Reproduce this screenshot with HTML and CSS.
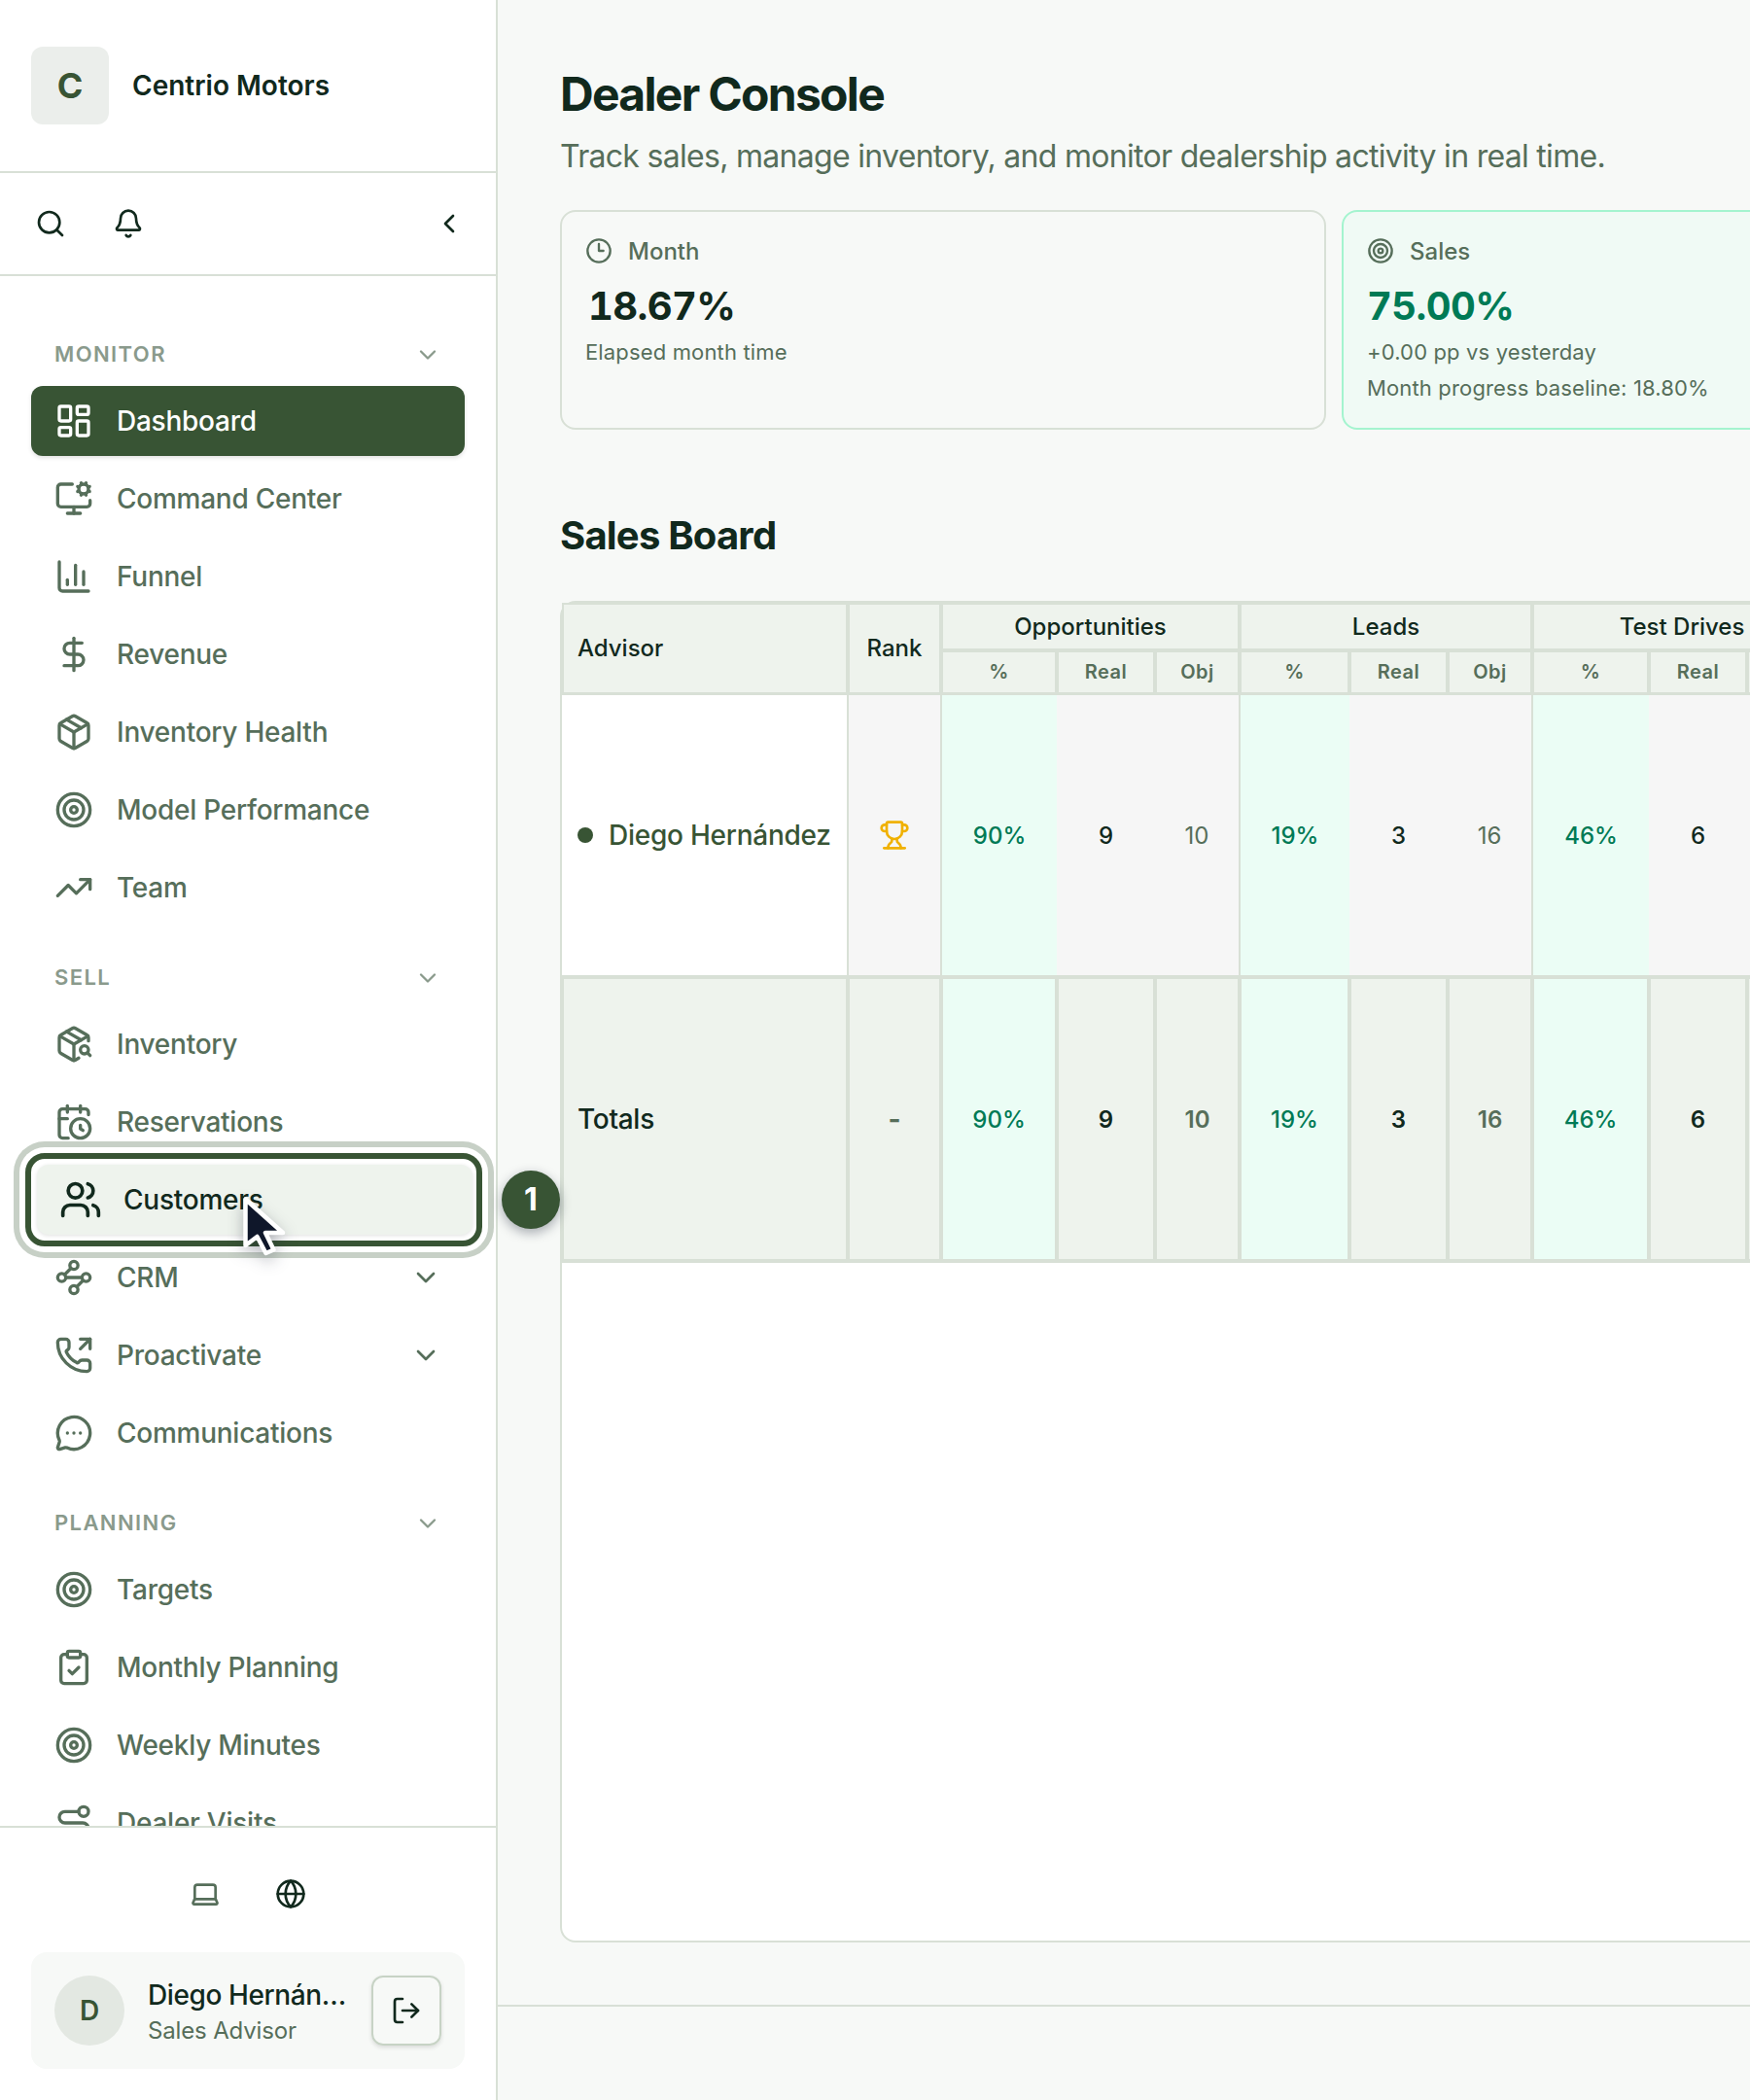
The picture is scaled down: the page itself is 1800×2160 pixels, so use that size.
FILE: index.html
```html
<!DOCTYPE html>
<html lang="en">
<head>
    <meta charset="UTF-8">
    <meta name="viewport" content="width=device-width, initial-scale=1.0">
    <title>Dealer Console - Centrio Motors</title>
    <link rel="stylesheet" href="styles.css">
</head>
<body>
    <!-- Shared icon shapes -->
    <svg class="sprite" aria-hidden="true">
        <symbol id="i-search" viewBox="0 0 24 24"><path d="m21 21-4.34-4.34"/><circle cx="11" cy="11" r="8"/></symbol>
        <symbol id="i-bell" viewBox="0 0 24 24"><path d="M10.268 21a2 2 0 0 0 3.464 0"/><path d="M3.262 15.326A1 1 0 0 0 4 17h16a1 1 0 0 0 .74-1.673C19.41 13.956 18 12.499 18 8A6 6 0 0 0 6 8c0 4.499-1.411 5.956-2.738 7.326"/></symbol>
        <symbol id="i-left" viewBox="0 0 24 24"><path d="m15 18-6-6 6-6"/></symbol>
        <symbol id="i-down" viewBox="0 0 24 24"><path d="m6 9 6 6 6-6"/></symbol>
        <symbol id="i-dashboard" viewBox="0 0 24 24"><rect width="7" height="9" x="3" y="3" rx="1"/><rect width="7" height="5" x="14" y="3" rx="1"/><rect width="7" height="9" x="14" y="12" rx="1"/><rect width="7" height="5" x="3" y="16" rx="1"/></symbol>
        <symbol id="i-monitor" viewBox="0 0 24 24"><path d="M12 17v4"/><path d="m14.305 7.53.923-.382"/><path d="m15.228 4.852-.923-.383"/><path d="m16.852 3.228-.383-.924"/><path d="m16.852 8.772-.383.923"/><path d="m19.148 3.228.383-.924"/><path d="m19.53 9.696-.382-.924"/><path d="m20.772 4.852.924-.383"/><path d="m20.772 7.148.924.383"/><path d="M22 13v2a2 2 0 0 1-2 2H4a2 2 0 0 1-2-2V5a2 2 0 0 1 2-2h7"/><path d="M8 21h8"/><circle cx="18" cy="6" r="3"/></symbol>
        <symbol id="i-chart" viewBox="0 0 24 24"><path d="M3 3v16a2 2 0 0 0 2 2h16"/><path d="M18 17V9"/><path d="M13 17V5"/><path d="M8 17v-3"/></symbol>
        <symbol id="i-dollar" viewBox="0 0 24 24"><path d="M12 2v20"/><path d="M17 5H9.5a3.5 3.5 0 0 0 0 7h5a3.5 3.5 0 0 1 0 7H6"/></symbol>
        <symbol id="i-package" viewBox="0 0 24 24"><path d="M11 21.73a2 2 0 0 0 2 0l7-4A2 2 0 0 0 21 16V8a2 2 0 0 0-1-1.73l-7-4a2 2 0 0 0-2 0l-7 4A2 2 0 0 0 3 8v8a2 2 0 0 0 1 1.73z"/><path d="M12 22V12"/><path d="M3.29 7 12 12l8.71-5"/><path d="m7.5 4.27 9 5.15"/></symbol>
        <symbol id="i-target" viewBox="0 0 24 24"><circle cx="12" cy="12" r="10"/><circle cx="12" cy="12" r="6"/><circle cx="12" cy="12" r="2"/></symbol>
        <symbol id="i-trend" viewBox="0 0 24 24"><path d="M16 7h6v6"/><path d="m22 7-8.5 8.5-5-5L2 17"/></symbol>
        <symbol id="i-package-search" viewBox="0 0 24 24"><path d="M21 10V8a2 2 0 0 0-1-1.73l-7-4a2 2 0 0 0-2 0l-7 4A2 2 0 0 0 3 8v8a2 2 0 0 0 1 1.73l7 4a2 2 0 0 0 2 0l2-1.14"/><path d="m7.5 4.27 9 5.15"/><path d="M3.29 7 12 12l8.71-5"/><path d="M12 22V12"/><circle cx="18.5" cy="15.5" r="2.5"/><path d="M20.27 17.27 22 19"/></symbol>
        <symbol id="i-calendar-clock" viewBox="0 0 24 24"><path d="M16 14v2.2l1.6 1"/><path d="M16 2v4"/><path d="M21 7.5V6a2 2 0 0 0-2-2H5a2 2 0 0 0-2 2v14a2 2 0 0 0 2 2h3.5"/><path d="M3 10h5"/><path d="M8 2v4"/><circle cx="16" cy="16" r="6"/></symbol>
        <symbol id="i-users" viewBox="0 0 24 24"><path d="M16 21v-2a4 4 0 0 0-4-4H6a4 4 0 0 0-4 4v2"/><path d="M16 3.128a4 4 0 0 1 0 7.744"/><path d="M22 21v-2a4 4 0 0 0-3-3.87"/><circle cx="9" cy="7" r="4"/></symbol>
        <symbol id="i-waypoints" viewBox="0 0 24 24"><circle cx="12" cy="4.5" r="2.5"/><path d="m10.2 6.3-3.9 3.9"/><circle cx="4.5" cy="12" r="2.5"/><path d="M7 12h10"/><circle cx="19.5" cy="12" r="2.5"/><path d="m13.8 17.7 3.9-3.9"/><circle cx="12" cy="19.5" r="2.5"/></symbol>
        <symbol id="i-phone" viewBox="0 0 24 24"><path d="m16 8 6-6"/><path d="M22 8V2h-6"/><path d="M13.832 16.568a1 1 0 0 0 1.213-.303l.355-.465A2 2 0 0 1 17 15h3a2 2 0 0 1 2 2v3a2 2 0 0 1-2 2A18 18 0 0 1 2 4a2 2 0 0 1 2-2h3a2 2 0 0 1 2 2v3a2 2 0 0 1-.8 1.6l-.468.351a1 1 0 0 0-.292 1.233 14 14 0 0 0 6.392 6.384"/></symbol>
        <symbol id="i-message" viewBox="0 0 24 24"><path d="M2.992 16.342a2 2 0 0 1 .094 1.167l-1.065 3.29a1 1 0 0 0 1.236 1.168l3.413-.998a2 2 0 0 1 1.099.092 10 10 0 1 0-4.777-4.719"/><path d="M8 12h.01"/><path d="M12 12h.01"/><path d="M16 12h.01"/></symbol>
        <symbol id="i-clipboard" viewBox="0 0 24 24"><rect width="8" height="4" x="8" y="2" rx="1"/><path d="M16 4h2a2 2 0 0 1 2 2v14a2 2 0 0 1-2 2H6a2 2 0 0 1-2-2V6a2 2 0 0 1 2-2h2"/><path d="m9 14 2 2 4-4"/></symbol>
        <symbol id="i-route" viewBox="0 0 24 24"><circle cx="6" cy="19" r="3"/><path d="M9 19h8.5a3.5 3.5 0 0 0 0-7h-11a3.5 3.5 0 0 1 0-7H15"/><circle cx="18" cy="5" r="3"/></symbol>
        <symbol id="i-laptop" viewBox="0 0 24 24"><path d="M18 5a2 2 0 0 1 2 2v8.526a2 2 0 0 0 .212.897l1.068 2.127a1 1 0 0 1-.9 1.45H3.62a1 1 0 0 1-.9-1.45l1.068-2.127A2 2 0 0 0 4 15.526V7a2 2 0 0 1 2-2z"/><path d="M20.054 15.987H3.946"/></symbol>
        <symbol id="i-globe" viewBox="0 0 24 24"><circle cx="12" cy="12" r="10"/><path d="M12 2a14.5 14.5 0 0 0 0 20 14.5 14.5 0 0 0 0-20"/><path d="M2 12h20"/></symbol>
        <symbol id="i-logout" viewBox="0 0 24 24"><path d="m16 17 5-5-5-5"/><path d="M21 12H9"/><path d="M9 21H5a2 2 0 0 1-2-2V5a2 2 0 0 1 2-2h4"/></symbol>
        <symbol id="i-clock" viewBox="0 0 24 24"><circle cx="12" cy="12" r="10"/><path d="M12 6v6h4"/></symbol>
        <symbol id="i-trophy" viewBox="0 0 24 24"><path d="M10 14.66v1.626a2 2 0 0 1-.976 1.696A5 5 0 0 0 7 21.978"/><path d="M14 14.66v1.626a2 2 0 0 0 .976 1.696A5 5 0 0 1 17 21.978"/><path d="M18 9h1.5a1 1 0 0 0 0-5H18"/><path d="M4 22h16"/><path d="M6 9a6 6 0 0 0 12 0V3a1 1 0 0 0-1-1H7a1 1 0 0 0-1 1z"/><path d="M6 9H4.5a1 1 0 0 1 0-5H6"/></symbol>
    </svg>

    <aside class="sidebar">
        <div class="brand">
            <div class="brand-logo">C</div>
            <span class="brand-name">Centrio Motors</span>
        </div>
        <div class="toolbar">
            <button class="icon-button" title="Search"><svg class="icon"><use href="#i-search"/></svg></button>
            <button class="icon-button" title="Notifications"><svg class="icon"><use href="#i-bell"/></svg></button>
            <button class="icon-button collapse" title="Collapse"><svg class="icon"><use href="#i-left"/></svg></button>
        </div>

        <nav class="nav">
            <div class="nav-label"><span>MONITOR</span> <svg class="icon"><use href="#i-down"/></svg></div>
            <div class="nav-group">
                <a class="nav-item active"><svg class="icon"><use href="#i-dashboard"/></svg><span>Dashboard</span></a>
                <a class="nav-item"><svg class="icon"><use href="#i-monitor"/></svg><span>Command Center</span></a>
                <a class="nav-item"><svg class="icon"><use href="#i-chart"/></svg><span>Funnel</span></a>
                <a class="nav-item"><svg class="icon"><use href="#i-dollar"/></svg><span>Revenue</span></a>
                <a class="nav-item"><svg class="icon"><use href="#i-package"/></svg><span>Inventory Health</span></a>
                <a class="nav-item"><svg class="icon"><use href="#i-target"/></svg><span>Model Performance</span></a>
                <a class="nav-item"><svg class="icon"><use href="#i-trend"/></svg><span>Team</span></a>
            </div>
            <div class="nav-label"><span>SELL</span> <svg class="icon"><use href="#i-down"/></svg></div>
            <div class="nav-group">
                <a class="nav-item"><svg class="icon"><use href="#i-package-search"/></svg><span>Inventory</span></a>
                <a class="nav-item"><svg class="icon"><use href="#i-calendar-clock"/></svg><span>Reservations</span></a>
                <a class="nav-item hovered"><svg class="icon"><use href="#i-users"/></svg><span>Customers</span></a>
                <a class="nav-item"><svg class="icon"><use href="#i-waypoints"/></svg><span>CRM</span><svg class="icon chevron"><use href="#i-down"/></svg></a>
                <a class="nav-item"><svg class="icon"><use href="#i-phone"/></svg><span>Proactivate</span><svg class="icon chevron"><use href="#i-down"/></svg></a>
                <a class="nav-item"><svg class="icon"><use href="#i-message"/></svg><span>Communications</span></a>
            </div>
            <div class="nav-label"><span>PLANNING</span> <svg class="icon"><use href="#i-down"/></svg></div>
            <div class="nav-group">
                <a class="nav-item"><svg class="icon"><use href="#i-target"/></svg><span>Targets</span></a>
                <a class="nav-item"><svg class="icon"><use href="#i-clipboard"/></svg><span>Monthly Planning</span></a>
                <a class="nav-item"><svg class="icon"><use href="#i-target"/></svg><span>Weekly Minutes</span></a>
                <a class="nav-item"><svg class="icon"><use href="#i-route"/></svg><span>Dealer Visits</span></a>
            </div>
        </nav>

        <div class="sidebar-footer">
            <div class="footer-tools">
                <button class="icon-button muted" title="Theme"><svg class="icon"><use href="#i-laptop"/></svg></button>
                <button class="icon-button" title="Language"><svg class="icon"><use href="#i-globe"/></svg></button>
            </div>
            <div class="user-card">
                <div class="avatar">D</div>
                <div class="user-info">
                    <div class="user-name">Diego Hernández</div>
                    <div class="user-role">Sales Advisor</div>
                </div>
                <button class="logout" title="Log out"><svg class="icon"><use href="#i-logout"/></svg></button>
            </div>
        </div>

        <!-- Walkthrough step marker and pointer -->
        <div class="step-badge">1</div>
        <svg class="cursor" viewBox="0 0 60 66"><path d="M12.5 7.5V55l12-9 9 17 8-3.500-8.500-17.500h18z"/></svg>
    </aside>

    <main class="main">
        <div class="content">
            <h1>Dealer Console</h1>
            <p class="subtitle">Track sales, manage inventory, and monitor dealership activity in real time.</p>
            <div class="cards">
                <div class="card">
                    <div class="card-title"><svg class="icon"><use href="#i-clock"/></svg>Month</div>
                    <div class="card-value">18.67%</div>
                    <div class="card-note">Elapsed month time</div>
                </div>
                <div class="card good">
                    <div class="card-title"><svg class="icon"><use href="#i-target"/></svg>Sales</div>
                    <div class="card-value">75.00%</div>
                    <div class="card-note">+0.00 pp vs yesterday</div>
                    <div class="card-note">Month progress baseline: 18.80%</div>
                </div>
            </div>

            <h2>Sales Board</h2>
            <div class="board">
                <table>
                    <colgroup>
                        <col class="c-advisor"><col class="c-rank">
                        <col class="c-pct"><col class="c-real"><col class="c-obj">
                        <col class="c-pct-sm"><col class="c-real"><col class="c-obj">
                        <col class="c-pct-lg"><col class="c-real"><col class="c-obj">
                    </colgroup>
                    <thead>
                        <tr>
                            <th rowspan="2" class="advisor tall">Advisor</th>
                            <th rowspan="2" class="tall">Rank</th>
                            <th colspan="3">Opportunities</th>
                            <th colspan="3">Leads</th>
                            <th colspan="3">Test Drives</th>
                        </tr>
                        <tr class="sub">
                            <th>%</th><th>Real</th><th>Obj</th>
                            <th>%</th><th>Real</th><th>Obj</th>
                            <th>%</th><th>Real</th><th></th>
                        </tr>
                    </thead>
                    <tbody>
                        <tr>
                            <td class="advisor end"><div class="advisor-name"><i class="dot"></i>Diego Hernández</div></td>
                            <td class="start end"><svg class="icon trophy"><use href="#i-trophy"/></svg></td>
                            <td class="pct start">90%</td><td>9</td><td class="obj end">10</td>
                            <td class="pct start">19%</td><td>3</td><td class="obj end">16</td>
                            <td class="pct start">46%</td><td>6</td><td class="obj end"></td>
                        </tr>
                    </tbody>
                    <tfoot>
                        <tr>
                            <td class="advisor">Totals</td>
                            <td class="obj none">-</td>
                            <td class="pct">90%</td><td>9</td><td class="obj">10</td>
                            <td class="pct">19%</td><td>3</td><td class="obj">16</td>
                            <td class="pct">46%</td><td>6</td><td class="obj"></td>
                        </tr>
                    </tfoot>
                </table>
            </div>
        </div>
        <footer class="page-footer"></footer>
    </main>
</body>
</html>
```
FILE: styles.css
```css
/* Common styles */
* {
    box-sizing: border-box;
}

body {
    font-family: Inter, "Liberation Sans", sans-serif;
    background-color: #f7f9f7;
    color: #11291d;
    margin: 0;
    height: 2160px;
    display: flex;
    overflow: hidden;
}

button {
    font: inherit;
    color: inherit;
    background: none;
    border: none;
    padding: 0;
}

.sprite {
    position: absolute;
    width: 0;
    height: 0;
}

.icon {
    width: 32px;
    height: 32px;
    flex: none;
    fill: none;
    stroke: currentColor;
    stroke-width: 2;
    stroke-linecap: round;
    stroke-linejoin: round;
}

/* Sidebar */
.sidebar {
    position: relative;
    width: 512px;
    flex: none;
    display: flex;
    flex-direction: column;
    background-color: #fff;
    border-right: 2px solid #d8e0d6;
}

.brand {
    display: flex;
    align-items: center;
    gap: 24px;
    height: 178px;
    flex: none;
    padding: 0 32px;
    border-bottom: 2px solid #d8e0d6;
}

.brand-logo {
    width: 80px;
    height: 80px;
    border-radius: 12px;
    background-color: #ebeeeb;
    color: #385434;
    font-size: 36px;
    font-weight: 700;
    line-height: 80px;
    text-align: center;
}

.brand-name {
    font-size: 28px;
    font-weight: 600;
}

.toolbar {
    display: flex;
    gap: 8px;
    flex: none;
    padding: 16px 12px 16px 16px;
    border-bottom: 2px solid #d8e0d6;
}

.icon-button {
    width: 72px;
    height: 72px;
    display: flex;
    align-items: center;
    justify-content: center;
}

.icon-button.muted {
    color: #566e5a;
}

.collapse {
    margin-left: auto;
}

/* Navigation */
.nav {
    flex: 1;
    min-height: 0;
    overflow: hidden;
    padding: 48px 32px 0;
}

.nav-label {
    display: flex;
    align-items: center;
    justify-content: space-between;
    height: 65px;
    padding: 0 24px;
    color: #8a9a8c;
    font-size: 22px;
    font-weight: 600;
    letter-spacing: 1.4px;
}

.nav-label span {
    padding-bottom: 1px;
}

.nav-label .icon {
    width: 28px;
    height: 28px;
}

.nav-group {
    display: flex;
    flex-direction: column;
    gap: 8px;
    margin-bottom: 24px;
}

.nav-item {
    display: flex;
    align-items: center;
    gap: 24px;
    height: 72px;
    padding: 0 24px;
    border-radius: 12px;
    color: #566e5a;
    font-size: 28px;
    font-weight: 500;
    letter-spacing: -0.25px;
}

.nav-item .icon {
    width: 40px;
    height: 40px;
}

.nav-item .chevron {
    width: 32px;
    height: 32px;
    margin-left: auto;
}

.nav-item.active {
    background-color: #385434;
    color: #fff;
    box-shadow: 0 2px 4px rgba(0, 0, 0, 0.12);
}

/* Highlighted step */
.nav-item.hovered {
    position: relative;
    left: 6px;
    gap: 22px;
    margin-right: -2px;
    background-color: #eef3ed;
    color: #11291d;
    box-shadow: 0 1px 4px rgba(0, 0, 0, 0.12);
}

.nav-item.hovered .icon {
    width: 44px;
    height: 44px;
    margin-left: -1px;
}

.nav-item.hovered::before {
    content: "";
    position: absolute;
    inset: -12px -10px -12px -12px;
    border: 6px solid #385434;
    border-radius: 20px;
    box-shadow: 0 0 0 6px #fff, 0 0 0 12px #c7d0c6;
}

/* Sidebar footer */
.sidebar-footer {
    flex: none;
    padding: 32px;
    border-top: 2px solid #d8e0d6;
}

.footer-tools {
    display: flex;
    justify-content: center;
    gap: 16px;
    margin-bottom: 24px;
}

.user-card {
    display: flex;
    align-items: center;
    gap: 24px;
    height: 120px;
    padding: 24px;
    border-radius: 16px;
    background-color: #f7f9f7;
}

.avatar {
    width: 72px;
    height: 72px;
    flex: none;
    border-radius: 50%;
    background-color: #e3e8e2;
    color: #385434;
    font-size: 28px;
    font-weight: 600;
    line-height: 72px;
    text-align: center;
}

.user-info {
    flex: 1;
    min-width: 0;
    margin-right: -4px;
    padding-top: 2px;
}

.user-name {
    overflow: hidden;
    white-space: nowrap;
    text-overflow: ellipsis;
    font-size: 28px;
    font-weight: 500;
    line-height: 40px;
    letter-spacing: -0.4px;
}

.user-role {
    color: #566e5a;
    font-size: 24px;
    line-height: 34px;
    letter-spacing: -0.15px;
}

.logout {
    display: flex;
    align-items: center;
    justify-content: center;
    width: 72px;
    height: 72px;
    flex: none;
    border: 2px solid #c7d3c5;
    border-radius: 12px;
    box-shadow: 0 2px 4px rgba(0, 0, 0, 0.12);
}

/* Walkthrough overlay */
.step-badge {
    position: absolute;
    left: 516px;
    top: 1204px;
    width: 60px;
    height: 60px;
    border-radius: 50%;
    background-color: #385434;
    color: #fff;
    box-shadow: 0 4px 12px rgba(15, 23, 42, 0.35);
    font-size: 32px;
    font-weight: 700;
    line-height: 60px;
    text-align: center;
}

.cursor {
    position: absolute;
    left: 240px;
    top: 1226px;
    width: 60px;
    height: 66px;
    overflow: visible;
    fill: #0f172a;
    stroke: #fff;
    stroke-width: 4.5;
    stroke-linejoin: round;
    filter: drop-shadow(0 6px 8px rgba(15, 23, 42, 0.3));
}

/* Main area */
.main {
    width: 1288px;
    display: flex;
    flex-direction: column;
    overflow: hidden;
}

.content {
    width: 1700px;
    height: 2062px;
    padding: 65px 0 0 64px;
}

h1 {
    margin: 0;
    font-size: 48px;
    font-weight: 700;
    line-height: 64px;
    letter-spacing: -1.7px;
}

.subtitle {
    margin: 8px 0 31px;
    color: #566e5a;
    font-size: 32px;
    line-height: 48px;
    letter-spacing: -0.7px;
}

.cards {
    display: grid;
    grid-template-columns: 788px 788px;
    gap: 16px;
}

.card {
    height: 226px;
    padding: 24px;
    border: 2px solid #d8e0d6;
    border-radius: 16px;
}

.card.good {
    background-color: #f0faf5;
    border-color: #a4f4cf;
}

.card-title {
    display: flex;
    align-items: center;
    gap: 16px;
    height: 32px;
    color: #566e5a;
    font-size: 24px;
    font-weight: 500;
}

.card-title .icon {
    width: 28px;
    height: 28px;
}

.card-value {
    margin: 15px 0 3px;
    padding-left: 3px;
    font-size: 40px;
    font-weight: 700;
    line-height: 52px;
    letter-spacing: -0.6px;
    font-variant-numeric: tabular-nums;
}

.good .card-value {
    padding-left: 0;
    color: #007a55;
}

.card-note {
    color: #566e5a;
    font-size: 22px;
    line-height: 37px;
    letter-spacing: 0.15px;
}

h2 {
    margin: 85px 0 43px;
    font-size: 40px;
    font-weight: 700;
    line-height: 48px;
    letter-spacing: -0.8px;
}

/* Sales board */
.board {
    height: 1380px;
    background-color: #fff;
    border: 2px solid #d8e0d6;
    border-radius: 16px;
}

table {
    width: 1305px;
    table-layout: fixed;
    border-collapse: separate;
    border-spacing: 0;
    font-size: 24px;
    font-weight: 500;
}

.c-advisor { width: 294px; }
.c-rank { width: 96px; }
.c-pct { width: 119px; }
.c-pct-sm { width: 113px; }
.c-pct-lg { width: 120px; }
.c-real { width: 101px; }
.c-obj { width: 87px; }

th,
td {
    padding: 0;
    text-align: center;
    border: 2px solid #d8e0d6;
}

th {
    height: 49px;
    background-color: #eef3ed;
    font-weight: 500;
}

.tall {
    padding-bottom: 1px;
    border-bottom-width: 3px;
}

.sub th {
    height: 46px;
    padding-bottom: 2px;
    border-bottom-width: 3px;
    color: #566e5a;
    font-size: 20px;
    font-weight: 600;
    letter-spacing: 0.5px;
}

.advisor {
    padding-left: 14px;
    text-align: left;
}

tbody td {
    height: 290px;
    background-color: #f6f6f6;
    border-width: 0 0 2px;
}

tbody .start {
    border-left-width: 1px;
}

tbody .end {
    border-right-width: 1px;
}

tbody .advisor {
    padding-left: 16px;
    background-color: #fff;
    color: #385434;
    font-size: 28px;
    letter-spacing: -0.25px;
}

.advisor-name {
    display: flex;
    align-items: center;
    gap: 16px;
    white-space: nowrap;
}

.dot {
    width: 16px;
    height: 16px;
    border-radius: 50%;
    background-color: #385434;
}

.trophy {
    display: block;
    margin: 0 auto;
    color: #f0b100;
}

.obj {
    color: #566e5a;
}

tbody .obj {
    font-weight: 400;
}

tfoot td {
    height: 294px;
    background-color: #eef3ed;
    border-bottom-width: 4px;
    font-weight: 600;
}

tfoot .advisor {
    font-size: 28px;
    font-weight: 500;
    letter-spacing: -0.3px;
}

tfoot .none {
    font-size: 28px;
    font-weight: 700;
}

tbody .pct,
tfoot .pct {
    background-color: #ebfdf5;
    color: #007a55;
    font-weight: 500;
}

.page-footer {
    flex: 1;
    border-top: 2px solid #d8e0d6;
}
```
